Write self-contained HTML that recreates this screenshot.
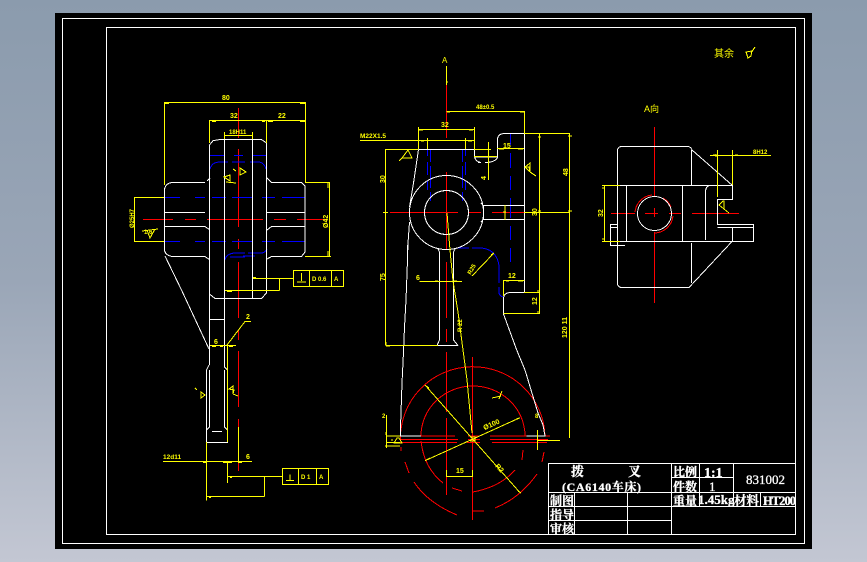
<!DOCTYPE html>
<html><head><meta charset="utf-8">
<style>
html,body{margin:0;padding:0;width:867px;height:562px;overflow:hidden;background:#8b9bad}
svg{display:block}
text{font-family:"Liberation Sans","Noto Sans CJK SC",sans-serif}
.y text{fill:#ff0;font-size:7px;font-weight:bold;stroke:none}
.t text{fill:#fff;stroke:#fff;stroke-width:.3;font-family:"Liberation Serif","Noto Serif CJK SC",serif}
</style></head><body>
<svg width="867" height="562" viewBox="0 0 867 562" xmlns="http://www.w3.org/2000/svg">
<defs><linearGradient id="bg" x1="0" y1="0" x2="0" y2="1"><stop offset="0" stop-color="#8b9bad"/><stop offset="0.5" stop-color="#9aa6b7"/><stop offset="1" stop-color="#c3c7d3"/></linearGradient></defs>
<rect width="867" height="562" fill="url(#bg)"/>
<rect x="55" y="13" width="757" height="536" fill="#000"/>
<g fill="none" shape-rendering="crispEdges">
<rect x="62.5" y="18.5" width="742" height="525" stroke="#fff"/>
<rect x="106.5" y="27.5" width="689" height="507" stroke="#fff"/>

<!-- RED -->
<g stroke="#f00">
<path d="M143 219.5H173M185 219.5H196M207 219.5H263M274 219.5H286M297 219.5H327"/>
<path d="M238.5 108V138M238.5 149V227M238.5 239V249M238.5 262V318M238.5 330V340M238.5 351V407M238.5 419V427M238.5 463V471"/>
<path d="M446.5 85V138M446.5 172V250M446.5 262V318M446.5 329V342M446.5 352V412M446.5 418V495M472.5 357V520"/>
<path d="M390 212.5H458M469 212.5H481M492 212.5H560"/>
<path d="M400.5 440A72 71 0 0 1 545 436"/>
<path d="M421 436A52 50 0 0 1 525 436"/>
<path d="M421 436H455M468 436H480M490 436H550M400 439.5H458M468 439.5H480M490 439.5H548M400 442.5H457M467 442.5H480M492 442.5H547"/>
<path d="M401 447V451M405 462L409 473M414 482Q428 503 457 515M421 441Q424 468 443 483M452 488L462 491M473 492Q500 487 515 470M495 508Q520 498 537 474M523 450L522 460M544 452L542 462M473 511H484"/>
<path d="M654.5 127V196M654.5 208V217M654.5 232V303M611 213.5H635M645 213.5H658M669 213.5H681M692 213.5H739"/>
<path d="M635 212A19 19 0 0 1 652 195M663 198A19 19 0 0 1 671 207M673 216A19 19 0 0 1 655 233"/>
</g>

<!-- BLUE -->
<g stroke="#00f">
<path d="M210 155.5H224M234 155.5H243M252 155.5H266M164 197.5H180M195 197.5H205M212 197.5H226M232 197.5H252M262 197.5H275M282 197.5H305M164 241.5H180M195 241.5H205M212 241.5H226M232 241.5H252M262 241.5H275M282 241.5H305"/>
<path d="M210 169Q212 162 220 162H228M232 162H245M250 162H258Q264 162 266 169"/>
<path d="M225 260Q226 254 234 253H245M230 257H245M243 256H255M248 253H262Q266 252 267 249"/>
<path d="M427.5 149V156M427.5 162V175M427.5 181V190M430.5 149V162M430.5 166V188M430.5 192V201"/>
<path d="M465.5 149V156M465.5 162V175M465.5 181V190M462.5 149V162M462.5 166V188M462.5 192V201"/>
<path d="M510.5 133V145M510.5 153V168M510.5 176V190M510.5 198V218M510.5 226V240M510.5 248V262"/>
<path d="M458 248H469M472 248H482Q497 250 499 266V283M499 287V292Q499 296 503 297"/>
</g>

<!-- WHITE -->
<g stroke="#fff">
<!-- left view -->
<path d="M209.5 145L213 140.7L220 139.5H261.5L266.5 143V293L261.5 298.5H215L209.5 294V145"/>
<path d="M224.5 139V298M252.5 139V298"/>
<path d="M164.5 189Q166 183 172 182.5H205M210 178L207 181M267 178L271.5 182.5H301.5L305 186V252L301.5 256.5H271.5L267 259M205 256.5H172Q165 255 164.5 250V189M205 256.5L210 260"/>
<path d="M164.5 212.5H205M164.5 226.5H205L210 230M267 230L271.5 226.5H305M267 212.5H305"/>
<path d="M165 256L181.5 290L209 349"/>
<path d="M209.5 290V365M224.5 290V367M209 319.5H224"/>
<path d="M209 365L206.5 370V442.5H227.5V370L224.5 367"/>
<path d="M209.5 370V427L206.5 430M224.5 370V427L227.5 430M212 431.5H222"/>
<!-- main view -->
<circle cx="446.5" cy="212.5" r="37"/>
<circle cx="446.5" cy="212.5" r="22"/>
<path d="M418.5 149.5H474.5V157Q476 162 481 162.5H478M474.5 157H497.5V139Q498 134 504 133.5H524.5V292.5H510Q504 293 503.5 298V314L516.7 350L525 370L538 413L543 425L545 436H526.5"/>
<path d="M485 162.5H488Q497 161 497.5 157"/>
<path d="M418.5 149.5L413.5 183L409.5 207M409.5 222L407.5 250L408 240L407.5 260L406 300L404.5 327L403.5 352L402 383L400.5 427V436H421"/>
<path d="M483.5 205.5H524.5M483.5 219.5H524.5M483.5 205.5V219.5M481 203L483.5 206M481 222L483.5 219"/>
<path d="M438 249L439.5 252V340L437 345.5H458M453.5 252L455 249M453.5 252V340L458 345.5"/>
<!-- right view -->
<path d="M617.5 150Q618 146.5 622 146.5H688Q691 147 692 150L732.5 185.5M617.5 150V284Q618 287.5 622 287.5H689L732 241.5"/>
<path d="M617.5 185.5H732.5V199.5H717.5V224.5H753.5V241.5H617.5"/>
<path d="M626.5 185.5V241.5M682.5 185.5V241.5M691.5 150V185.5M691.5 243V283M705.5 191Q706 186 710 185.5M705.5 191V240"/>
<path d="M717.5 227.5H753.5M732.5 227.5V241.5"/>
<path d="M617 224.5H610.5V245.5H625M610.5 227.5H617"/>
<circle cx="654.5" cy="213.5" r="17"/>
</g>

<!-- YELLOW lines -->
<g stroke="#ff0">
<path d="M164.5 102.5H305.5M164.5 102V185M305.5 102V183M209.5 120.5H305.5M209.5 120V143M266.5 120V143M224.5 135.5H252.5M224.5 132V139M252.5 132V139"/>
<path d="M164 103.5H169M300 103.5H305M212 121.5H216M262 121.5H265M268 121.5H273M300 121.5H305"/>
<path d="M306 182.5H330M305 256.5H331M329.5 183V256M134 197.5H164M134 241.5H164M134.5 197V241M328 183V188M328 251V256"/>
<rect x="293.5" y="270.5" width="50" height="16"/>
<rect x="282.5" y="468.5" width="46" height="16"/>
<path d="M309.5 270V286M331.5 270V286M298.5 468V484M316.5 468V484"/>
<path d="M253 278.5H293M279.5 278V290.5M225 290.5H279.5M227 291.5H232M253 277.5H256"/>
<path d="M301.5 273V281M297 282H306M290 474.5V480M286 480.5H294"/>
<path d="M210 345.5H236M227 345L245 321.5H251M227.5 345V442M206.5 442V500.5M163 461.5H252M238.5 427V461M227.5 461V483M227.5 476.5H282.5M264.5 476V496.5M206.5 496.5H264.5"/>
<path d="M212 346.5H216M220 346.5H223M229 346.5H233M203 462.5H206M223 462.5H232M238 462.5H242M209 497.5H211M230 477.5H232"/>
<!-- main -->
<path d="M446.5 66V85M446 82H448M446.5 111.5H524.5M524.5 111V133M447 112H450M520 112H524M418.5 129.5H474.5M418.5 127V149M474.5 127V149M419 130H423M469 130H473"/>
<path d="M360 140.5H474M427.5 138V149M465.5 138V149M421 141H424M468 141H472"/>
<path d="M385.5 149.5H418M385.5 149V345M385.5 345.5H438M383 212.5H388M386 346H390M386 342V345"/>
<path d="M524 133.5H570M539.5 133V314M569.5 133V438M568 136H572M538 137H541M538 211H541M568 211H572M524 212.5H570"/>
<path d="M497 148.5H524M499 149H504M518 149H523M474 149.5H491M474 156.5H497M488.5 142V180M505 205V220M503 212H506"/>
<path d="M447 213L450 250L453 281L458 312L463 350L467 380L472 433"/>
<path d="M419.5 281.5H462M435 281H438M454 281H457"/>
<path d="M472 276L493.5 253.5M491 255L494 253"/>
<path d="M503.5 280.5H524.5M503.5 280V296M506 281H509M518 281H523M503.5 313.5H540M524 292.5H540M538 290V293M538 311V314"/>
<path d="M425 385L520 492.7M425 460.7L520 417.7M426 386L429 388M518 491L521 493M426 460L430 458M516 419L520 418"/>
<path d="M446.5 470V477M472.5 470V477M446.5 476.5H472.5"/>
<path d="M386.5 415V448M386 432V435M386 436H400M386 442.5H400M385 446H400M537.5 430V450M537 440.5H560M470 437H475V441H470"/>
<!-- right -->
<path d="M602 185.5H620M602 241.5H620M604.5 185V241M603 187V189M603 238V240"/>
<path d="M717.5 150V197M732.5 150V185M710 155.5H771M713 155H716M735 155H738M716 154V157"/>
<!-- roughness symbols -->
<path d="M142 231L158 229M147 230L150 238L155 229" />
<path d="M230 175L224 177L230 181ZM226 182L236 183M240 168L246 172L240 175ZM240 168V175M236 171L233 169"/>
<path d="M402 158L408 150L412 158H402L399 161"/>
<path d="M529 167L525 167L530 163V172ZM530 172L536 176M525 167L530 172"/>
<path d="M201 392L205 395L201 398V392ZM195 388L197 390"/>
<path d="M234 390L229 389L233 386V394ZM233 394L238 396"/>
<path d="M723 201L719 205L724 209V201ZM724 209L729 213"/>
<path d="M397 438L394 443H402L399 438ZM391 440H393"/>
<path d="M501 396L492 398M499 399L502 391"/>
<!-- check mark -->
<path d="M746 52L752 51 751 56 748 58 746 52ZM751 53L755 47"/>
</g>

<!-- YELLOW text -->
<g class="y">
<text x="222" y="100" font-size="7">80</text>
<text x="230" y="118">32</text>
<text x="278" y="118">22</text>
<text x="229" y="134" style="font-size:6px">18H11</text>
<text transform="translate(325 224) rotate(-90)" x="-4" y="3" >Ø42</text>
<text transform="translate(132 219) rotate(-90)" x="-9" y="2" style="font-size:6px">Ø25H7</text>
<text x="144" y="234" style="font-size:6px">1.6</text>
<text x="312" y="281" style="font-size:6px">D 0.6</text>
<text x="334" y="281" style="font-size:6px">A</text>
<text x="301" y="479" style="font-size:6px">D 1</text>
<text x="319" y="479" style="font-size:6px">A</text>
<text x="246" y="319">2</text>
<text x="214" y="344">6</text>
<text x="163" y="459" style="font-size:6.5px">12d11</text>
<text x="246" y="459">6</text>
<text x="442" y="63" style="font-size:8px;font-weight:normal">A</text>
<text x="476" y="109" style="font-size:6px">48±0.5</text>
<text x="441" y="127">32</text>
<text x="360" y="138" style="font-size:6.5px">M22X1.5</text>
<text x="379" y="183" transform="rotate(-90 382 180)">30</text>
<text x="379" y="281" transform="rotate(-90 382 278)">75</text>
<text x="503" y="148">15</text>
<text transform="translate(486 178) rotate(-90)" x="-2" y="0">4</text>
<text transform="translate(565 172) rotate(-90)" x="-4" y="3">48</text>
<text transform="translate(534 212) rotate(-90)" x="-4" y="3">30</text>
<text transform="translate(566 327) rotate(-90)" x="-11" y="1">120 11</text>
<text x="416" y="280">6</text>
<text x="508" y="278">12</text>
<text transform="translate(534 301) rotate(-90)" x="-4" y="3">12</text>
<text transform="translate(470 270) rotate(-60)" x="-4" y="3" style="font-size:6px">R25</text>
<text transform="translate(459 325) rotate(-90)" x="-7" y="3" style="font-size:6px">R 22</text>
<text transform="translate(491 425) rotate(-24)" x="-8" y="2">Ø100</text>
<text transform="translate(499 468) rotate(48)" x="-4" y="2">R2</text>
<text x="456" y="473">15</text>
<text x="382" y="418" style="font-size:6px">2</text>
<text x="535" y="418" style="font-size:6px">8</text>
<text x="596" y="216" transform="rotate(-90 600 213)">32</text>
<text x="753" y="154" style="font-size:6px">8H12</text>
<text x="644" y="112" style="font-size:9px;font-weight:normal">A向</text>
<text x="714" y="57" style="font-size:10px;font-weight:normal">其余</text>
</g>

<!-- Title block -->
<g stroke="#fff">
<rect x="548.5" y="463.5" width="247" height="71"/>
<path d="M548 492.5H795M548 506.5H795M548 520.5H672M671.5 463V534M699.5 463V506M733.5 463V506M760.5 492V506M574.5 492V534M627.5 492V534M671 477.5H733"/>
</g>
</g>
<g class="t">
<text x="571" y="476" font-size="13" font-weight="bold">拨</text>
<text x="628" y="476" font-size="13" font-weight="bold">叉</text>
<text x="562" y="491" font-size="12" font-weight="bold" textLength="79">(CA6140车床)</text>
<text x="673" y="476" font-size="12" font-weight="bold">比例</text>
<text x="673" y="491" font-size="12" font-weight="bold">件数</text>
<text x="673" y="505" font-size="12" font-weight="bold">重量</text>
<text x="704" y="477" font-size="14" font-weight="bold">1:1</text>
<text x="709" y="491" font-size="13">1</text>
<text x="746" y="484" font-size="13">831002</text>
<text x="698" y="504" font-size="13" font-weight="bold">1.45kg</text>
<text x="734" y="505" font-size="12.5" font-weight="bold">材料</text>
<text x="763" y="505" font-size="12.5" font-weight="bold" textLength="33">HT200</text>
<text x="550" y="505" font-size="12" font-weight="bold">制图</text>
<text x="550" y="519" font-size="12" font-weight="bold">指导</text>
<text x="550" y="533" font-size="12" font-weight="bold">审核</text>
</g>
</svg>
</body></html>
